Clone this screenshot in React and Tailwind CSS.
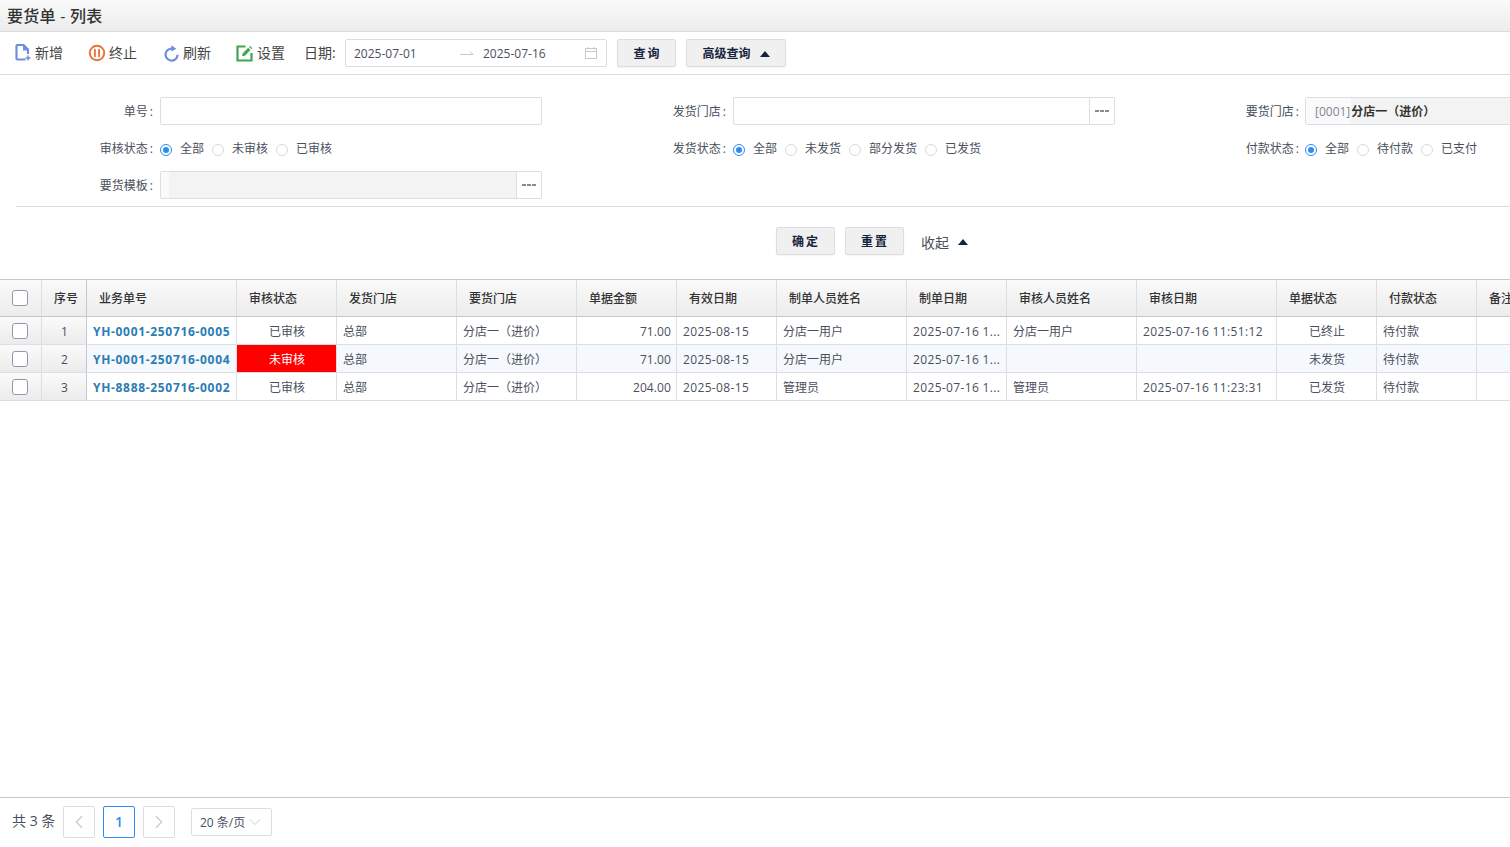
import React from 'react';
import { ChevronLeft, ChevronRight, ChevronDown } from 'lucide-react';

const cols = [
  { title: '序号', w: 'w-[45px]' },
  { title: '业务单号', w: 'w-[150px]' },
  { title: '审核状态', w: 'w-[100px]' },
  { title: '发货门店', w: 'w-[120px]' },
  { title: '要货门店', w: 'w-[120px]' },
  { title: '单据金额', w: 'w-[100px]' },
  { title: '有效日期', w: 'w-[100px]' },
  { title: '制单人员姓名', w: 'w-[130px]' },
  { title: '制单日期', w: 'w-[100px]' },
  { title: '审核人员姓名', w: 'w-[130px]' },
  { title: '审核日期', w: 'w-[140px]' },
  { title: '单据状态', w: 'w-[100px]' },
  { title: '付款状态', w: 'w-[100px]' },
  { title: '备注', w: 'w-[100px]' },
];

const rows = [
  { no: 'YH-0001-250716-0005', audit: '已审核', amount: '71.00', maker: '分店一用户', auditor: '分店一用户', auditDate: '2025-07-16 11:51:12', status: '已终止' },
  { no: 'YH-0001-250716-0004', audit: '未审核', amount: '71.00', maker: '分店一用户', auditor: '', auditDate: '', status: '未发货' },
  { no: 'YH-8888-250716-0002', audit: '已审核', amount: '204.00', maker: '管理员', auditor: '管理员', auditDate: '2025-07-16 11:23:31', status: '已发货' },
];

function Check() {
  return <span className="block w-[16px] h-[16px] rounded-[3px] border border-[#8f9bab] bg-white" />;
}

function Radio({ on, label }) {
  return (
    <span className="flex items-center">
      {on ? (
        <span className="w-[12px] h-[12px] mt-[2px] rounded-full border border-[#2d8cf0] flex items-center justify-center bg-white">
          <span className="w-[6px] h-[6px] rounded-full bg-[#2d8cf0]" />
        </span>
      ) : (
        <span className="w-[12px] h-[12px] mt-[2px] rounded-full border border-[#d9d9d9] bg-white" />
      )}
      <span className="ml-[8px] mr-[7px] text-[#4a4f5c]">{label}</span>
    </span>
  );
}

function RadioGroup({ items }) {
  return (
    <div className="flex items-center gap-[1px]">
      {items.map((t, i) => <Radio key={t} on={i === 0} label={t} />)}
    </div>
  );
}

function Label({ children, low }) {
  return <span className={`w-[153px] shrink-0 text-right text-[#4a4f5c] ${low ? 'pt-[2px]' : ''}`}>{children}<span className="ml-[2px]">:</span></span>;
}

function Dots() {
  return (
    <span className="w-[25px] h-full shrink-0 flex items-center justify-center border-l border-[#dcdee2] bg-white">
      <svg width="14" height="2" viewBox="0 0 14 2">
        <path d="M0 0h4v2H0zM5 0h4v2H5zM10 0h4v2h-4z" fill="#8a8a8a" />
      </svg>
    </span>
  );
}

function Btn({ children, className }) {
  return (
    <button className={`h-[28px] pt-[1px] flex items-center justify-center rounded-[2px] border border-[#dcdee2] bg-[#f0f0f0] text-[12px] font-bold text-[#17233d] shadow-[0_1px_2px_rgba(0,0,0,0.05)] ${className}`}>
      {children}
    </button>
  );
}

function Up() {
  return <span className="w-0 h-0 border-l-[5px] border-r-[5px] border-b-[6px] border-l-transparent border-r-transparent border-b-[#17233d]" />;
}

function ToolItem({ icon, label, className }) {
  return (
    <span className={`flex items-center gap-[3px] text-[14px] text-[#444] ${className}`}>
      {icon}
      <span className="pb-[2px]">{label}</span>
    </span>
  );
}

const NewIcon = (
  <svg width="17" height="18" viewBox="0 0 17 18" fill="none">
    <path d="M10.5 15.5H2.5a1 1 0 0 1-1-1V2a1 1 0 0 1 1-1h6l4.5 4.5V10" stroke="#6e8fdb" strokeWidth="2.2" />
    <path d="M8 1v5.5h5z" fill="#6e8fdb" />
    <path d="M13 11.5v5M10.5 14h5" stroke="#6e8fdb" strokeWidth="1.5" />
  </svg>
);

const StopIcon = (
  <svg width="18" height="18" viewBox="0 0 18 18" fill="none">
    <circle cx="9" cy="9" r="7.2" stroke="#e8763a" strokeWidth="2" />
    <path d="M6.9 5.8v6.4M11.1 5.8v6.4" stroke="#e8763a" strokeWidth="1.9" strokeLinecap="round" />
  </svg>
);

const RefreshIcon = (
  <svg width="17" height="18" viewBox="0 0 17 18" fill="none">
    <path d="M11.6 5.4A6 6 0 1 0 14.6 10.8" stroke="#6e8fdb" strokeWidth="2.2" />
    <path d="M8.3 1.2l5 3.6-5 2.6z" fill="#6e8fdb" />
  </svg>
);

const SetIcon = (
  <svg width="18" height="18" viewBox="0 0 18 18" fill="none">
    <path d="M9.5 2.5H1.5v14h14V9" stroke="#3fa652" strokeWidth="2.2" />
    <path d="M6 12.2l.6-2.8 5.6-5.6 2.3 2.3-5.6 5.6z" fill="#3fa652" />
    <path d="M13.2 2.9l.9-.9 2.2 2.2-.9.9z" fill="#3fa652" />
  </svg>
);

export default function App() {
  return (
    <div className="w-[1510px] h-[847px] overflow-hidden flex flex-col bg-white text-[12px] text-[#4a4f5c] font-['Open_Sans','Noto_Sans_CJK_SC',sans-serif]">
      <div className="h-[32px] shrink-0 flex items-center pl-[7px] border-b border-[#dcdcdc] bg-gradient-to-b from-[#fafafa] to-[#ececec] text-[16px] font-medium tracking-[0.25px] text-[#333]">
        要货单 - 列表
      </div>

      <div className="h-[43px] shrink-0 flex items-center pl-[15px] border-b border-[#dcdcdc]">
        <ToolItem icon={NewIcon} label="新增" className="w-[73px]" />
        <ToolItem icon={StopIcon} label="终止" className="w-[75px]" />
        <ToolItem icon={RefreshIcon} label="刷新" className="w-[73px]" />
        <ToolItem icon={SetIcon} label="设置" className="w-[68px]" />
        <span className="text-[14px] text-[#444] w-[41px] pb-[2px] whitespace-nowrap">日期:</span>
        <div className="w-[262px] h-[28px] flex items-center border border-[#dcdee2] rounded-[2px] pl-[8px] text-[#4a4f5c]">
          <span className="w-[106px] pt-[2px]">2025-07-01</span>
          <svg width="14" height="8" viewBox="0 0 14 8" fill="none" className="mr-[9px]">
            <path d="M0 5.5h13L10 2.5" stroke="#c5c8ce" />
          </svg>
          <span className="w-[101px] pt-[2px]">2025-07-16</span>
          <svg width="14" height="14" viewBox="0 0 14 14" fill="none">
            <path d="M1.5 2.5h11v10h-11zM1.5 5.5h11M4 1v2.5M10 1v2.5" stroke="#c5c8ce" />
          </svg>
        </div>
        <Btn className="w-[59px] ml-[10px] pl-[2px] tracking-[2px]">查询</Btn>
        <Btn className="w-[100px] ml-[10px] gap-[9px]">高级查询<Up /></Btn>
      </div>

      <div className="shrink-0 h-[131px] pt-[22px]">
        <div className="flex h-[28px] items-center">
          <div className="w-[573px] shrink-0 flex items-center">
            <Label low>单号</Label>
            <div className="w-[382px] ml-[7px] h-[28px] border border-[#dcdee2] rounded-[2px]" />
          </div>
          <div className="w-[573px] shrink-0 flex items-center">
            <Label low>发货门店</Label>
            <div className="w-[382px] ml-[7px] h-[28px] border border-[#dcdee2] rounded-[2px] flex justify-end"><Dots /></div>
          </div>
          <div className="w-[400px] shrink-0 flex items-center">
            <Label low>要货门店</Label>
            <div className="w-[382px] shrink-0 ml-[6px] h-[28px] border border-[#dcdee2] rounded-[2px] bg-[#f3f3f3] flex items-center overflow-hidden">
              <span className="h-full pl-[9px] pr-[1px] pt-[2px] flex items-center bg-[#fafafa] text-[#808695]">[0001]</span>
              <span className="pt-[2px] font-bold text-[#333]">分店一（进价）</span>
            </div>
          </div>
        </div>
        <div className="flex h-[28px] mt-[10px] items-center">
          <div className="w-[573px] shrink-0 flex items-center">
            <Label>审核状态</Label>
            <div className="ml-[7px]"><RadioGroup items={['全部', '未审核', '已审核']} /></div>
          </div>
          <div className="w-[573px] shrink-0 flex items-center">
            <Label>发货状态</Label>
            <div className="ml-[7px]"><RadioGroup items={['全部', '未发货', '部分发货', '已发货']} /></div>
          </div>
          <div className="w-[340px] shrink-0 flex items-center">
            <Label>付款状态</Label>
            <div className="ml-[6px]"><RadioGroup items={['全部', '待付款', '已支付']} /></div>
          </div>
        </div>
        <div className="flex h-[28px] mt-[8px] items-center">
          <Label low>要货模板</Label>
          <div className="w-[382px] ml-[7px] h-[28px] border border-[#dcdee2] rounded-[2px] bg-[#f3f3f3] flex justify-between overflow-hidden">
            <span className="w-[8px] h-full bg-[#fafafa]" />
            <Dots />
          </div>
        </div>
      </div>
      <div className="h-px shrink-0 bg-[#dcdcdc] ml-[16px]" />

      <div className="shrink-0 h-[72px] flex items-start pt-[20px] pl-[776px]">
        <Btn className="w-[59px] pl-[1px] tracking-[2px]">确定</Btn>
        <Btn className="w-[59px] ml-[10px] pl-[1px] tracking-[2px]">重置</Btn>
        <span className="ml-[17px] h-[28px] flex items-center gap-[9px] text-[#4a4f5c] text-[14px] translate-y-[1px]">收起<Up /></span>
      </div>

      <div className="flex-1 min-h-0 overflow-hidden">
        <div className="flex h-[38px] w-[1620px] border-y border-[#c5c8ce] bg-gradient-to-b from-[#fafafa] to-[#ececec] text-[12px] font-medium text-[#333]">
          <div className="w-[42px] shrink-0 flex items-center justify-center pr-[2px] border-r border-[#dcdee2]"><Check /></div>
          {cols.map((c, i) => (
            <div key={c.title} className={`${c.w} shrink-0 flex items-center pl-[12px] pt-[1px] border-r ${i === 0 ? 'border-[#c5c8ce]' : 'border-[#dcdee2]'}`}>
              {c.title}
            </div>
          ))}
        </div>
        {rows.map((r, i) => (
          <div key={r.no} className={`flex h-[28px] w-[1620px] border-b border-[#dcdee2] tracking-[0.35px] ${i === 1 ? 'bg-[#f5f9fd]' : 'bg-white'}`}>
            <div className="w-[42px] shrink-0 flex items-center justify-center pr-[2px] pt-[1px] border-r border-[#dcdee2] bg-gradient-to-b from-[#fafafa] to-[#ececec]"><Check /></div>
            <div className="w-[45px] shrink-0 flex items-center justify-center pl-[1px] pt-[3px] border-r border-[#c5c8ce] bg-gradient-to-b from-[#fafafa] to-[#ececec]">{i + 1}</div>
            <div className="w-[150px] shrink-0 flex items-center pl-[6px] pt-[3px] border-r border-[#dcdee2] font-bold tracking-[0.68px] text-[#2b7cb3] whitespace-nowrap">{r.no}</div>
            <div className={`w-[100px] shrink-0 flex items-center justify-center pl-[1px] pt-[3px] border-r border-[#dcdee2] tracking-normal ${r.audit === '未审核' ? 'bg-[#ff0000] text-white' : ''}`}>{r.audit}</div>
            <div className="w-[120px] shrink-0 flex items-center pl-[6px] pt-[3px] border-r border-[#dcdee2] tracking-normal">总部</div>
            <div className="w-[120px] shrink-0 flex items-center pl-[6px] pt-[3px] border-r border-[#dcdee2] tracking-normal">分店一（进价）</div>
            <div className="w-[100px] shrink-0 flex items-center justify-end pr-[5px] pt-[3px] border-r border-[#dcdee2] tracking-[0.1px]">{r.amount}</div>
            <div className="w-[100px] shrink-0 flex items-center pl-[6px] pt-[3px] border-r border-[#dcdee2]">2025-08-15</div>
            <div className="w-[130px] shrink-0 flex items-center pl-[6px] pt-[3px] border-r border-[#dcdee2] tracking-normal">{r.maker}</div>
            <div className="w-[100px] shrink-0 flex items-center pl-[6px] pt-[3px] border-r border-[#dcdee2] whitespace-nowrap">2025-07-16 1...</div>
            <div className="w-[130px] shrink-0 flex items-center pl-[6px] pt-[3px] border-r border-[#dcdee2] tracking-normal">{r.auditor}</div>
            <div className="w-[140px] shrink-0 flex items-center pl-[6px] pt-[3px] border-r border-[#dcdee2] whitespace-nowrap">{r.auditDate}</div>
            <div className="w-[100px] shrink-0 flex items-center justify-center pl-[1px] pt-[3px] border-r border-[#dcdee2] tracking-normal">{r.status}</div>
            <div className="w-[100px] shrink-0 flex items-center pl-[6px] pt-[3px] border-r border-[#dcdee2] tracking-normal">待付款</div>
            <div className="w-[100px] shrink-0 border-r border-[#dcdee2]" />
          </div>
        ))}
      </div>

      <div className="h-[50px] shrink-0 flex items-center pl-[12px] pb-[2px] border-t border-[#c8c8c8] text-[#4a4f5c]">
        <span className="w-[51px] text-[14px] pb-[2px] whitespace-nowrap">共 3 条</span>
        <span className="w-[32px] h-[32px] flex items-center justify-center border border-[#dcdee2] rounded-[2px] text-[#c5c8ce]"><ChevronLeft size={22} strokeWidth={1.2} /></span>
        <span className="w-[32px] h-[32px] ml-[8px] flex items-center justify-center border border-[#2d8cf0] rounded-[2px] text-[#2d8cf0] font-semibold text-[14px]">1</span>
        <span className="w-[32px] h-[32px] ml-[8px] flex items-center justify-center border border-[#dcdee2] rounded-[2px] text-[#c5c8ce]"><ChevronRight size={22} strokeWidth={1.2} /></span>
        <span className="w-[81px] h-[28px] ml-[16px] mt-[1px] flex items-center pl-[8px] pt-[2px] border border-[#dcdee2] rounded-[2px] whitespace-nowrap">
          20 条/页
          <ChevronDown size={20} strokeWidth={1.1} className="ml-[0px] -mt-[2px] text-[#c5c8ce]" />
        </span>
      </div>
    </div>
  );
}
